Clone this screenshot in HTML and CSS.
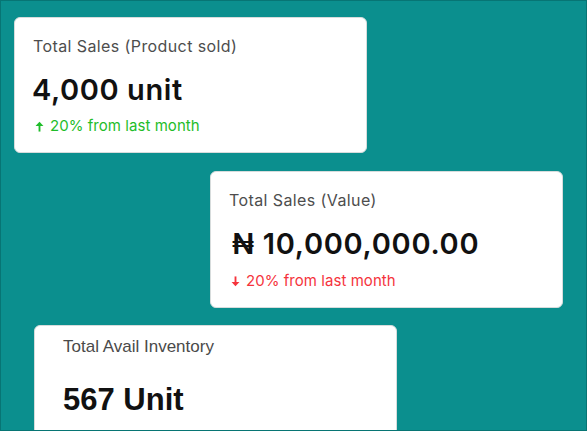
FILE: index.html
```html
<!DOCTYPE html>
<html lang="en">
<head>
<meta charset="utf-8">
<title>Sales overview</title>
<link rel="stylesheet" href="styles.css">
</head>
<body>
<main class="board">
  <section class="stat stat--sold">
    <h2 class="stat-label">Total Sales (Product sold)</h2>
    <p class="stat-value">4,000 unit</p>
    <p class="stat-trend trend-up">
      <svg class="trend-icon" viewBox="0 0 8 10" aria-hidden="true"><path d="M4 9.6V3" /><path d="M0.4 4.6L4 0.6 7.6 4.6Z" class="head"/></svg>
      20% from last month
    </p>
  </section>

  <section class="stat stat--value">
    <h2 class="stat-label">Total Sales (Value)</h2>
    <p class="stat-value">₦ 10,000,000.00</p>
    <p class="stat-trend trend-down">
      <svg class="trend-icon" viewBox="0 0 8 10" aria-hidden="true"><path d="M4 0.4V7" /><path d="M0.4 5.4L4 9.4 7.6 5.4Z" class="head"/></svg>
      20% from last month
    </p>
  </section>

  <section class="stat stat--inventory">
    <h2 class="stat-label">Total Avail Inventory</h2>
    <p class="stat-value">567 Unit</p>
  </section>
</main>
</body>
</html>
```

FILE: styles.css
```css
* { box-sizing: border-box; }

html, body {
  margin: 0;
  padding: 0;
}

body {
  width: 587px;
  height: 431px;
  overflow: hidden;
  font-family: Inter, "Noto Sans", sans-serif;
}

.board {
  width: 587px;
  height: 431px;
  background: #0b8f8e;
  border: 1px solid #077574;
  display: flex;
  flex-direction: column;
  align-items: flex-start;
  overflow: hidden;
}

.stat {
  background: #ffffff;
  border: 1px solid #d7dcdc;
  border-radius: 6px;
  flex: none;
}

.stat--sold {
  width: 353px;
  height: 136px;
  margin: 16px 0 0 13px;
  padding: 18px 0 0 18px;
}

.stat--value {
  width: 353px;
  height: 137px;
  margin: 18px 0 0 209px;
  padding: 18px 0 0 18px;
}

.stat--inventory {
  width: 363px;
  height: 140px;
  margin: 17px 0 0 33px;
  padding: 11px 0 0 28px;
  font-family: "Liberation Sans", Arial, sans-serif;
}

.stat-label {
  margin: 0;
  font-size: 16px;
  line-height: 20px;
  font-weight: 400;
  color: #4d4d4d;
  letter-spacing: 0.4px;
}

.stat-value {
  margin: 17px 0 0 -1px;
  font-size: 29px;
  line-height: 34px;
  font-weight: 600;
  color: #111111;
  letter-spacing: 0.6px;
}

.stat--value .stat-value {
  margin-left: 3px;
  letter-spacing: 0.7px;
}

.stat--inventory .stat-label {
  font-size: 17px;
  line-height: 20px;
  color: #4a4a4a;
  letter-spacing: 0;
}

.stat--inventory .stat-value {
  margin: 25px 0 0;
  font-size: 31px;
  line-height: 36px;
  font-weight: 700;
  letter-spacing: 0;
}

.stat-trend {
  margin: 10px 0 0;
  display: flex;
  align-items: center;
  gap: 6px;
  font-size: 15px;
  line-height: 18px;
  font-weight: 400;
  letter-spacing: 0.05px;
}

.stat--value .stat-trend {
  margin-top: 11px;
}

.trend-icon {
  width: 9px;
  height: 11px;
  margin-left: 2px;
}

.trend-icon path {
  stroke: currentColor;
  stroke-width: 1.7;
  fill: none;
}

.trend-icon path.head {
  fill: currentColor;
  stroke: none;
}

.trend-up { color: #1fbd2a; }
.trend-down { color: #f5343c; }
```
